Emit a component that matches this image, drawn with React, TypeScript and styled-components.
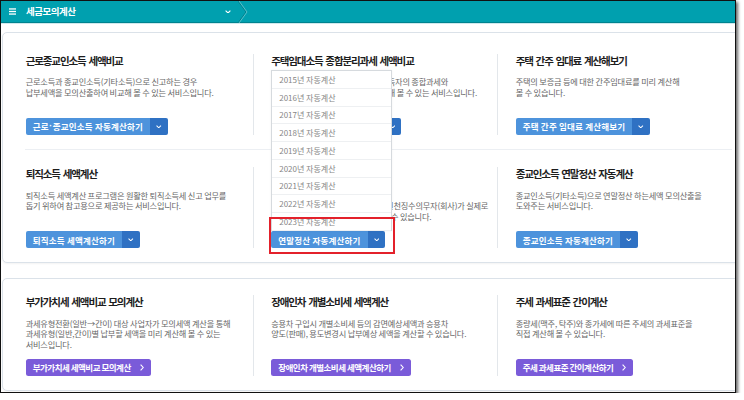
import React from 'react';
import styled, { createGlobalStyle } from 'styled-components';

const GlobalStyle = createGlobalStyle`
  html, body { margin: 0; padding: 0; background: #ffffff; }
  body { font-family: "Noto Sans CJK KR", "Noto Sans", sans-serif; }
  * { box-sizing: border-box; }
`;

const Frame = styled.div`
  width: 736px;
  height: 393px;
  border: 1px solid #111;
  box-shadow: 2px 2px 3px rgba(0, 0, 0, 0.6);
  overflow: hidden;
  background: #fff;
`;

const Header = styled.header`
  height: 22px;
  background: #00a0af;
  border-bottom: 1px solid #00838f;
  box-shadow: 0 1px 0 #cfe9ed;
  display: flex;
  align-items: stretch;
  color: #fff;
`;

const Crumb = styled.div`
  width: 237px;
  display: flex;
  align-items: center;
  padding: 0 7px 0 8px;
  gap: 10px;
`;

const CrumbTitle = styled.span`
  font-size: 9.5px;
  font-weight: 700;
  letter-spacing: -0.5px;
  line-height: 1;
  flex: 1;
`;

const Main = styled.main`
  padding: 9px 0 0 1px;
`;

const Card = styled.section<{ $top: number; $bottom: number }>`
  width: 745px;
  border: 1px solid #dbe2e9;
  border-radius: 5px;
  background: #fff;
  box-shadow: 0 1px 2px rgba(0, 0, 0, 0.05);
  padding: ${(p) => p.$top}px 0 ${(p) => p.$bottom}px 5px;
  & + & {
    margin-top: 15px;
  }
`;

const Row = styled.div`
  display: grid;
  grid-template-columns: repeat(3, 244.5px);
`;

const RowSep = styled.div`
  height: 1px;
  background: #eceff3;
  margin: 13.8px 14px 17.5px 17px;
`;

const Col = styled.div<{ $first: boolean }>`
  padding: 0 17.7px;
  border-left: ${(p) => (p.$first ? 'none' : '1px solid #e3e7eb')};
  display: flex;
  flex-direction: column;
  align-items: flex-start;
`;

const Title = styled.h3`
  margin: 0;
  font-size: 10.5px;
  font-weight: 700;
  line-height: 13px;
  letter-spacing: -1.1px;
  word-spacing: 1.5px;
  color: #1d1d1d;
  white-space: nowrap;
`;

const Desc = styled.p`
  margin: 9.25px 0 0;
  font-size: 8.2px;
  line-height: 10.5px;
  min-height: 31.5px;
  letter-spacing: -0.2px;
  color: #666;
  white-space: nowrap;
`;

const ButtonWrap = styled.div`
  position: relative;
  display: flex;
  margin-top: 9.75px;
`;

const SplitMain = styled.span`
  height: 17.5px;
  padding: 0 7px;
  display: flex;
  align-items: center;
  background: #4d93dc;
  color: #fff;
  font-size: 8.5px;
  font-weight: 700;
  letter-spacing: 0.2px;
  white-space: nowrap;
  border-radius: 2px 0 0 2px;
`;

const Dot = styled.span`
  font-family: "Liberation Sans", sans-serif;
  margin: 0 0.5px;
`;

const SplitArrow = styled.span`
  width: 17.5px;
  height: 17.5px;
  display: flex;
  align-items: center;
  justify-content: center;
  background: #2f71c3;
  border-radius: 0 2px 2px 0;
`;

const PurpleButton = styled.span`
  height: 17px;
  padding: 0 7px;
  display: flex;
  align-items: center;
  gap: 9px;
  background: #7a5bd9;
  color: #fff;
  font-size: 8.5px;
  font-weight: 700;
  letter-spacing: -0.5px;
  white-space: nowrap;
  border-radius: 2.5px;
`;

const DropList = styled.ul`
  position: absolute;
  left: 0;
  bottom: 100%;
  width: 121px;
  margin: 0;
  padding: 0;
  list-style: none;
  background: #fff;
  border: 1px solid #d6dade;
  border-bottom: none;
  box-shadow: 0 0 2px rgba(0, 0, 0, 0.06);
  z-index: 2;
`;

const DropItem = styled.li`
  height: 17.75px;
  display: flex;
  align-items: center;
  padding-left: 7px;
  border-bottom: 1px solid #eef0f2;
  font-size: 8px;
  color: #868686;
  white-space: nowrap;
`;

const RedBox = styled.div`
  position: absolute;
  left: -2.4px;
  top: -13.4px;
  width: 126px;
  height: 36.7px;
  border: 2px solid #e3212b;
  z-index: 3;
  pointer-events: none;
`;

const MenuIcon = () => (
  <svg width="7" height="7" viewBox="0 0 7 7">
    <rect y="0.3" width="7" height="1.3" fill="#fff" />
    <rect y="2.85" width="7" height="1.3" fill="#fff" />
    <rect y="5.4" width="7" height="1.3" fill="#fff" />
  </svg>
);

const ChevronDown = ({ w = 6 }: { w?: number }) => (
  <svg width={w} height={w * 0.6} viewBox="0 0 6 3.6">
    <polyline points="0.6,0.6 3,3 5.4,0.6" fill="none" stroke="#fff" strokeWidth="1.1" />
  </svg>
);

const ChevronRight = () => (
  <svg width="4" height="7" viewBox="0 0 4 7">
    <polyline points="0.6,0.6 3.2,3.5 0.6,6.4" fill="none" stroke="#fff" strokeWidth="1.1" />
  </svg>
);

const Separator = () => (
  <svg width="10" height="22" viewBox="0 0 10 22">
    <polyline points="0,0 8,11 0,22" fill="none" stroke="#00808c" strokeWidth="1" />
    <polyline points="1,0 9,11 1,22" fill="none" stroke="#7fd0d8" strokeWidth="0.7" />
  </svg>
);

type Item = {
  title: string;
  desc: string[];
  btn: React.ReactNode;
  kind: 'split' | 'purple';
  open?: boolean;
};

const years = [2015, 2016, 2017, 2018, 2019, 2020, 2021, 2022, 2023];

const card1: Item[][] = [
  [
    {
      title: '근로종교인소득 세액비교',
      desc: ['근로소득과 종교인소득(기타소득)으로 신고하는 경우', '납부세액을 모의산출하여 비교해 볼 수 있는 서비스입니다.'],
      btn: (
        <>
          근로<Dot>·</Dot>종교인소득 자동계산하기
        </>
      ),
      kind: 'split',
    },
    {
      title: '주택임대소득 종합분리과세 세액비교',
      desc: ['주택임대소득이 있는 개인 및 사업소득자의 종합과세와', '분리과세 시의 예상 납부세액을 비교해 볼 수 있는 서비스입니다.'],
      btn: '주택임대소득 세액비교하기',
      kind: 'split',
    },
    {
      title: '주택 간주 임대료 계산해보기',
      desc: ['주택의 보증금 등에 대한 간주임대료를 미리 계산해', '볼 수 있습니다.'],
      btn: '주택 간주 임대료 계산해보기',
      kind: 'split',
    },
  ],
  [
    {
      title: '퇴직소득 세액계산',
      desc: ['퇴직소득 세액계산 프로그램은 원활한 퇴직소득세 신고 업무를', '돕기 위하여 참고용으로 제공하는 서비스입니다.'],
      btn: '퇴직소득 세액계산하기',
      kind: 'split',
    },
    {
      title: '연말정산 자동계산',
      desc: [
        '연말정산 자동계산은',
        '근로소득자의 연말정산 예상세액을 원천징수의무자(회사)가 실제로',
        '연말정산 전에 세액을 미리 계산해 볼 수 있습니다.',
      ],
      btn: '연말정산 자동계산하기',
      kind: 'split',
      open: true,
    },
    {
      title: '종교인소득 연말정산 자동계산',
      desc: ['종교인소득(기타소득)으로 연말정산 하는세액 모의산출을', '도와주는 서비스입니다.'],
      btn: '종교인소득 자동계산하기',
      kind: 'split',
    },
  ],
];

const card2: Item[] = [
  {
    title: '부가가치세 세액비교 모의계산',
    desc: ['과세유형전환(일반→간이) 대상 사업자가 모의세액 계산을 통해', '과세유형(일반,간이)별 납부할 세액을 미리 계산해 볼 수 있는', '서비스입니다.'],
    btn: '부가가치세 세액비교 모의계산',
    kind: 'purple',
  },
  {
    title: '장애인차 개별소비세 세액계산',
    desc: ['승용차 구입시 개별소비세 등의 감면예상세액과 승용차', '양도(판매), 용도변경시 납부예상 세액을 계산할 수 있습니다.'],
    btn: '장애인차 개별소비세 세액계산하기',
    kind: 'purple',
  },
  {
    title: '주세 과세표준 간이계산',
    desc: ['종량세(맥주, 탁주)와 종가세에 따른 주세의 과세표준을', '직접 계산해 볼 수 있습니다.'],
    btn: '주세 과세표준 간이계산하기',
    kind: 'purple',
  },
];

const Service = ({ item, first }: { item: Item; first: boolean }) => (
  <Col $first={first}>
    <Title>{item.title}</Title>
    <Desc>
      {item.desc.map((line, i) => (
        <React.Fragment key={i}>
          {i > 0 && <br />}
          {line}
        </React.Fragment>
      ))}
    </Desc>
    <ButtonWrap>
      {item.kind === 'split' ? (
        <>
          <SplitMain>{item.btn}</SplitMain>
          <SplitArrow>
            <ChevronDown w={5.5} />
          </SplitArrow>
        </>
      ) : (
        <PurpleButton>
          {item.btn}
          <ChevronRight />
        </PurpleButton>
      )}
      {item.open && (
        <>
          <DropList>
            {years.map((y) => (
              <DropItem key={y}>{y}년 자동계산</DropItem>
            ))}
          </DropList>
          <RedBox />
        </>
      )}
    </ButtonWrap>
  </Col>
);

export default function App() {
  return (
    <>
      <GlobalStyle />
      <Frame>
        <Header>
          <Crumb>
            <MenuIcon />
            <CrumbTitle>세금모의계산</CrumbTitle>
            <ChevronDown w={6} />
          </Crumb>
          <Separator />
        </Header>
        <Main>
          <Card $top={21} $bottom={13.5}>
            {card1.map((row, ri) => (
              <React.Fragment key={ri}>
                {ri > 0 && <RowSep />}
                <Row>
                  {row.map((item, ci) => (
                    <Service key={ci} item={item} first={ci === 0} />
                  ))}
                </Row>
              </React.Fragment>
            ))}
          </Card>
          <Card $top={16.5} $bottom={14}>
            <Row>
              {card2.map((item, ci) => (
                <Service key={ci} item={item} first={ci === 0} />
              ))}
            </Row>
          </Card>
        </Main>
      </Frame>
    </>
  );
}
